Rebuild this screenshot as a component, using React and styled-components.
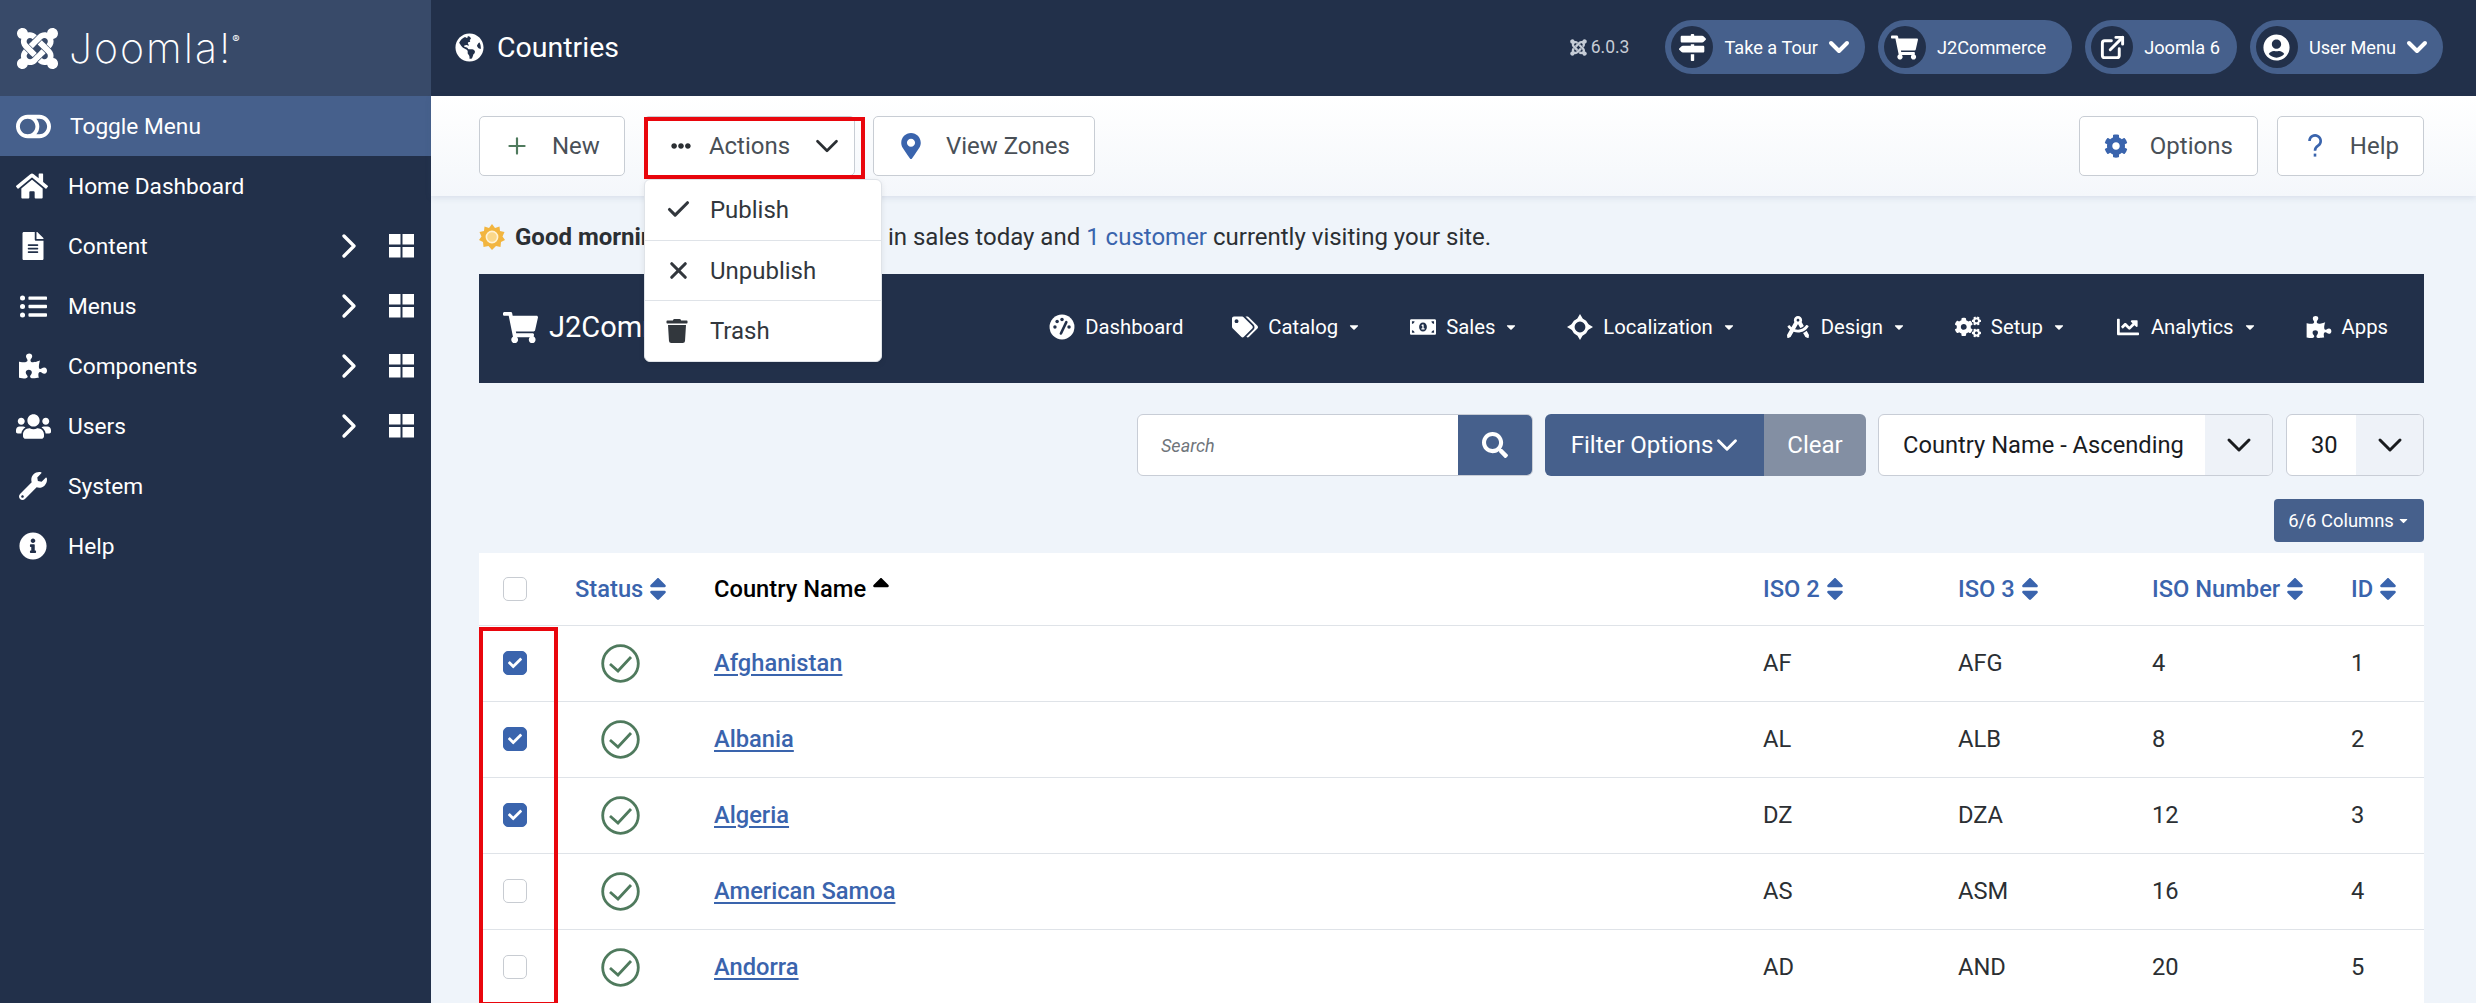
import React from "react"
import styled, { createGlobalStyle } from "styled-components"
import {
  FaChartLine, FaCheck, FaCog, FaCogs, FaDraftingCompass, FaEllipsisH, FaFileAlt,
  FaGlobeAmericas, FaHome, FaInfoCircle, FaJoomla, FaListUl, FaMapMarkerAlt, FaMapSigns,
  FaMoneyBillAlt, FaPuzzlePiece, FaSearch, FaShoppingCart, FaSort, FaSortUp,
  FaTags, FaToggleOff, FaTrash, FaUserCircle, FaUsers, FaWrench, FaCaretDown,
} from "react-icons/fa"
import { Check as CheckMark, ChevronDown, ChevronRight, ExternalLink, Plus, X } from "lucide-react"

const NAVY = "#22304a"
const STEEL = "#46608c"
const BLUE = "#3a64ad"

const Global = createGlobalStyle`
  html, body { margin: 0; padding: 0; background: #eff4fa; }
  body { font-family: Roboto, "Liberation Sans", sans-serif; overflow: hidden; }
  * { box-sizing: border-box; }
`

const Shell = styled.div`
  display: grid;
  grid-template-columns: 431px 1fr;
  width: 2476px;
  height: 1003px;
  overflow: hidden;
`

/* sidebar */
const Sidebar = styled.aside`
  background: ${NAVY};
  color: #fff;
  display: flex;
  flex-direction: column;
`
const LogoBar = styled.div`
  height: 96px;
  background: #384a69;
  display: flex;
  align-items: center;
  padding-left: 14px;
  gap: 8px;
  svg { font-size: 47px; }
`
const Wordmark = styled.span`
  font-family: Inter, sans-serif;
  font-weight: 200;
  font-size: 41px;
  letter-spacing: 2px;
  line-height: 1;
  sup { font-size: 11px; font-weight: 400; vertical-align: 20px; letter-spacing: 0; margin-left: 0; }
`
const SideRow = styled.div`
  height: 60px;
  display: grid;
  grid-template-columns: ${p => (p.$active ? 54 : 52)}px 1fr auto auto;
  align-items: center;
  padding: 0 17px 0 16px;
  font-size: 22.7px;
  background: ${p => (p.$active ? STEEL : "transparent")};
`
const SideIcon = styled.span`
  display: flex;
  svg { font-size: ${p => p.$size || 28}px; margin-left: ${p => p.$shift || 0}px; }
`
const SideChevron = styled.span`
  display: flex;
  margin-right: 20px;
  svg { width: 40px; height: 40px; stroke-width: 2; }
`
const TileIcon = styled.svg`
  width: 25px;
  height: 24px;
  display: block;
  fill: #fff;
`

/* top header */
const Main = styled.main`
  display: flex;
  flex-direction: column;
  min-width: 0;
`
const Header = styled.header`
  height: 96px;
  flex: none;
  background: ${NAVY};
  color: #fff;
  display: flex;
  align-items: center;
  padding: 0 33px 2px 24px;
`
const Title = styled.h1`
  margin: 0;
  flex: 1;
  display: flex;
  align-items: center;
  gap: 13px;
  font-size: 28.5px;
  font-weight: 400;
  svg { font-size: 29px; }
`
const Version = styled.span`
  display: flex;
  align-items: center;
  gap: 3px;
  margin-right: 23px;
  color: #c6ccd6;
  font-size: 17.5px;
  svg { font-size: 19px; }
`
const Pill = styled.div`
  height: 54px;
  margin-left: 13px;
  padding: 0 ${p => p.$right}px 0 6px;
  border-radius: 27px;
  background: ${STEEL};
  display: flex;
  align-items: center;
  font-size: 18.2px;
`
const PillIcon = styled.span`
  width: 42px;
  height: 42px;
  border-radius: 50%;
  background: ${NAVY};
  margin-right: 11px;
  display: flex;
  align-items: center;
  justify-content: center;
  svg { width: 27px; height: 27px; }
`
const PillChevron = styled.span`
  display: flex;
  margin-left: 5px;
  svg { width: 32px; height: 32px; stroke-width: 3; }
`

/* toolbar */
const Toolbar = styled.div`
  height: 100px;
  flex: none;
  padding: 20px 52px 0 48px;
  display: flex;
  background: linear-gradient(#fff, #f4f7fb);
  box-shadow: 0 2px 6px rgba(60, 80, 120, .12);
  position: relative;
  z-index: 1;
`
const ToolButton = styled.div`
  height: 60px;
  padding: 0 24px;
  margin-right: ${p => p.$gap ?? 19}px;
  background: #fff;
  border: 1px solid #c8cdd4;
  border-radius: 5px;
  display: flex;
  align-items: center;
  gap: 22px;
  font-size: 24px;
  color: #495057;
`
const ActionsButton = styled(ToolButton)`
  width: 211px;
  padding: 0 11px 0 26px;
  gap: 18px;
`
const ChevronSlot = styled.span`
  display: flex;
  margin-left: auto;
  color: #2b2f33;
  svg { width: 38px; height: 38px; stroke-width: 1.7; }
`
const ToolIcon = styled.span`
  display: flex;
  color: ${p => p.$color || BLUE};
  svg { font-size: ${p => p.$size || 24}px; }
`
const QuestionIcon = styled.svg`
  width: 26px;
  height: 24px;
  display: block;
  fill: none;
  stroke: ${BLUE};
  stroke-width: 2.6;
`
const Spacer = styled.div`flex: 1;`
const ActionsWrap = styled.div`
  position: relative;
  margin-right: 18px;
`
const RedFrame = styled.div`
  position: absolute;
  left: 0;
  top: 1px;
  width: 221px;
  height: 62px;
  border: 4px solid #e9060d;
  pointer-events: none;
`
const ActionsMenu = styled.div`
  position: absolute;
  left: 0;
  top: 63px;
  width: 238px;
  height: 183px;
  background: #fff;
  border: 1px solid #dfe3e8;
  border-radius: 6px;
  box-shadow: 0 2px 6px rgba(0, 0, 0, .08);
  display: flex;
  flex-direction: column;
  z-index: 5;
`
const MenuItem = styled.div`
  flex: 1;
  display: grid;
  grid-template-columns: 45px 1fr;
  align-items: center;
  padding-left: 20px;
  font-size: 24px;
  color: #32373d;
  & + & { border-top: 1px solid #dfe3e8; }
  svg { display: block; }
`
const TrashIcon = styled(FaTrash)`
  font-size: 24px;
`

/* content */
const Content = styled.div`
  flex: 1;
  min-height: 0;
  padding: 0 52px 0 48px;
`
const Greeting = styled.p`
  margin: 0;
  height: 78px;
  padding-top: 4px;
  display: flex;
  align-items: center;
  font-size: 24px;
  color: #2b2f33;
  white-space: pre;
  strong { font-weight: 700; }
  a { color: ${BLUE}; }
`
const SunIcon = styled.svg`
  width: 26px;
  height: 26px;
  margin-right: 10px;
`
const NavBar = styled.nav`
  height: 109px;
  background: ${NAVY};
  color: #fff;
  display: flex;
  align-items: center;
  justify-content: space-between;
  padding: 0 36px 3px 24px;
`
const Brand = styled.div`
  display: flex;
  align-items: center;
  gap: 11px;
  font-size: 29px;
  svg { font-size: 35px; }
`
const NavItems = styled.div`
  display: flex;
  gap: 49px;
`
const NavItem = styled.div`
  display: flex;
  align-items: center;
  font-size: 20.3px;
  > svg:first-child { font-size: 22px; width: 26px; margin-right: 10px; }
`
const Caret = styled(FaCaretDown)`
  font-size: 14px;
  margin-left: 9px;
`
const FilterRow = styled.div`
  display: flex;
  justify-content: flex-end;
  margin-top: 31px;
  height: 62px;
`
const SearchBox = styled.div`
  width: 396px;
  display: flex;
  border: 1px solid #c8cdd6;
  border-radius: 6px;
  background: #fff;
  overflow: hidden;
  margin-right: 12px;
`
const SearchField = styled.div`
  flex: 1;
  display: flex;
  align-items: center;
  padding-left: 23px;
  font-size: 18px;
  font-style: italic;
  color: #6f757b;
`
const SearchButton = styled.div`
  width: 74px;
  background: ${STEEL};
  color: #fff;
  display: flex;
  align-items: center;
  justify-content: center;
  svg { font-size: 26px; }
`
const FilterGroup = styled.div`
  display: flex;
  border-radius: 6px;
  overflow: hidden;
  margin-right: 12px;
  font-size: 24px;
  color: #fff;
`
const FilterButton = styled.div`
  width: 219px;
  background: ${STEEL};
  display: flex;
  align-items: center;
  justify-content: center;
  svg { width: 34px; height: 34px; stroke-width: 2; margin: 0 -6px 0 -3px; }
`
const ClearButton = styled.div`
  width: 102px;
  background: #838fa3;
  display: flex;
  align-items: center;
  justify-content: center;
`
const Select = styled.div`
  width: ${p => p.$width}px;
  margin-left: ${p => p.$gap || 0}px;
  display: grid;
  grid-template-columns: 1fr 67px;
  background: #fff;
  border: 1px solid #c8cdd6;
  border-radius: 6px;
  overflow: hidden;
  font-size: 23.7px;
  color: #1a1c1f;
`
const SelectValue = styled.div`
  display: flex;
  align-items: center;
  padding-left: ${p => p.$pad}px;
`
const SelectArrow = styled.div`
  background: #eef2f8;
  display: flex;
  align-items: center;
  justify-content: center;
  svg { width: 40px; height: 40px; stroke-width: 1.8; }
`
const ColumnsRow = styled.div`
  display: flex;
  justify-content: flex-end;
  margin-top: 23px;
`
const ColumnsButton = styled.div`
  width: 150px;
  height: 43px;
  background: ${STEEL};
  color: #fff;
  border-radius: 4px;
  display: flex;
  align-items: center;
  justify-content: center;
  font-size: 18.4px;
  svg { font-size: 13px; margin-left: 3px; }
`

/* table */
const TableWrap = styled.div`
  position: relative;
  margin-top: 11px;
  background: #fff;
`
const Table = styled.table`
  width: 100%;
  table-layout: fixed;
  border-collapse: collapse;
  font-size: 23.7px;
  color: #2b2f33;
  th, td { padding: 0; text-align: left; }
  th { height: 72px; font-weight: 500; }
  td { height: 76px; }
  tr { border-bottom: 1px solid #dfe3e8; }
  a { color: ${BLUE}; font-weight: 500; text-decoration: underline; text-underline-offset: 3px; }
`
const Sortable = styled.span`
  display: inline-flex;
  align-items: center;
  gap: 1px;
  color: ${p => (p.$active ? "#000" : BLUE)};
  svg { font-size: 28px; }
`
const Check = styled.span`
  margin-left: 24px;
  width: 24px;
  height: 24px;
  border-radius: 5px;
  display: flex;
  align-items: center;
  justify-content: center;
  color: #fff;
  border: 1px solid ${p => (p.$on ? BLUE : "#c8ccd2")};
  background: ${p => (p.$on ? BLUE : "#fff")};
  svg { font-size: 14px; }
`
const StatusIcon = styled.svg`
  width: 39px;
  height: 39px;
  display: block;
  margin-left: 26px;
`
const ColumnFrame = styled.div`
  position: absolute;
  left: 0;
  top: 74px;
  width: 79px;
  bottom: 0;
  border: 4px solid #e9060d;
  pointer-events: none;
`

const Tiles = () => (
  <TileIcon viewBox="0 0 25 24">
    <rect x="0" y="0" width="11.5" height="10.5" />
    <rect x="13.5" y="0" width="11.5" height="10.5" />
    <rect x="0" y="13" width="11.5" height="10.5" />
    <rect x="13.5" y="13" width="11.5" height="10.5" />
  </TileIcon>
)

const GaugeIcon = () => (
  <svg viewBox="0 0 24 24">
    <circle cx="12" cy="12" r="11.5" fill="#fff" />
    <g fill={NAVY}>
      <circle cx="5.5" cy="12" r="1.6" />
      <circle cx="7.5" cy="7" r="1.6" />
      <circle cx="12" cy="5" r="1.6" />
      <circle cx="18.5" cy="12" r="1.6" />
    </g>
    <path d="M11 18 L16 7.5" stroke={NAVY} strokeWidth="2.4" strokeLinecap="round" />
  </svg>
)

const TargetIcon = () => (
  <svg viewBox="0 0 24 24">
    <path d="M12 0 L15 5 H9 Z M12 24 L15 19 H9 Z M0 12 L5 9 V15 Z M24 12 L19 9 V15 Z" fill="#fff" />
    <circle cx="12" cy="12" r="6.5" fill="none" stroke="#fff" strokeWidth="3" />
  </svg>
)

const Sun = () => (
  <SunIcon viewBox="0 0 26 26">
    <path
      d="M13 0 L16 4 L20.5 2.5 L21 7 L25.5 8 L23.5 12.5 L26 16 L22 18 L21.5 23 L17 22 L13 26 L9.5 22 L4.5 23 L4 18 L0 16 L2.5 12.5 L.5 8 L5 7 L5.5 2.5 L10 4 Z"
      fill="#f2b53f"
    />
    <circle cx="13" cy="13" r="5.6" fill="#fbd88a" stroke="#fff3d6" strokeWidth="1.6" />
  </SunIcon>
)

const sideItems = [
  { label: "Home Dashboard", icon: <FaHome />, size: 32 },
  { label: "Content", icon: <FaFileAlt />, size: 28, shift: 3, more: true },
  { label: "Menus", icon: <FaListUl />, size: 27, shift: 4, more: true },
  { label: "Components", icon: <FaPuzzlePiece />, size: 28, shift: 3, more: true },
  { label: "Users", icon: <FaUsers />, size: 35, shift: 0, more: true },
  { label: "System", icon: <FaWrench />, size: 28, shift: 3 },
  { label: "Help", icon: <FaInfoCircle />, size: 28, shift: 3 },
]

const navItems = [
  { label: "Dashboard", icon: <GaugeIcon /> },
  { label: "Catalog", icon: <FaTags />, caret: true },
  { label: "Sales", icon: <FaMoneyBillAlt />, caret: true },
  { label: "Localization", icon: <TargetIcon />, caret: true },
  { label: "Design", icon: <FaDraftingCompass />, caret: true },
  { label: "Setup", icon: <FaCogs />, caret: true },
  { label: "Analytics", icon: <FaChartLine />, caret: true },
  { label: "Apps", icon: <FaPuzzlePiece /> },
]

const countries = [
  ["Afghanistan", "AF", "AFG", 4, 1, true],
  ["Albania", "AL", "ALB", 8, 2, true],
  ["Algeria", "DZ", "DZA", 12, 3, true],
  ["American Samoa", "AS", "ASM", 16, 4, false],
  ["Andorra", "AD", "AND", 20, 5, false],
]

const Status = () => (
  <StatusIcon viewBox="0 0 39 39" fill="none">
    <circle cx="19.5" cy="19.5" r="17.8" stroke="#4f7a5d" strokeWidth="2.8" />
    <path d="M9 20 L17 27 L30 13" stroke="#4f7a5d" strokeWidth="2.8" />
  </StatusIcon>
)

const App = () => {
  return (<Shell>
    <Global />
    <Sidebar>
      <LogoBar>
        <FaJoomla />
        <Wordmark>Joomla!<sup>®</sup></Wordmark>
      </LogoBar>
      <SideRow $active>
        <SideIcon $size={35}><FaToggleOff /></SideIcon>
        <span>Toggle Menu</span>
      </SideRow>
      {sideItems.map(item => (
        <SideRow key={item.label}>
          <SideIcon $size={item.size} $shift={item.shift}>{item.icon}</SideIcon>
          <span>{item.label}</span>
          {item.more && <SideChevron><ChevronRight /></SideChevron>}
          {item.more && <Tiles />}
        </SideRow>
      ))}
    </Sidebar>

    <Main>
      <Header>
        <Title><FaGlobeAmericas />Countries</Title>
        <Version><FaJoomla />6.0.3</Version>
        <Pill $right={10}>
          <PillIcon><FaMapSigns /></PillIcon>Take a Tour
          <PillChevron><ChevronDown /></PillChevron>
        </Pill>
        <Pill $right={26}>
          <PillIcon><FaShoppingCart /></PillIcon>J2Commerce
        </Pill>
        <Pill $right={17}>
          <PillIcon><ExternalLink strokeWidth={2.6} /></PillIcon>Joomla 6
        </Pill>
        <Pill $right={10}>
          <PillIcon><FaUserCircle /></PillIcon>User Menu
          <PillChevron><ChevronDown /></PillChevron>
        </Pill>
      </Header>

      <Toolbar>
        <ToolButton>
          <ToolIcon $color="#4f7a5d"><Plus size={26} /></ToolIcon>New
        </ToolButton>
        <ActionsWrap>
          <ActionsButton $gap={0}>
            <ToolIcon $color="#2b2f33" $size={20}><FaEllipsisH /></ToolIcon>
            Actions
            <ChevronSlot><ChevronDown /></ChevronSlot>
          </ActionsButton>
          <RedFrame />
          <ActionsMenu>
            <MenuItem><CheckMark size={27} strokeWidth={2.8} />Publish</MenuItem>
            <MenuItem><X size={27} strokeWidth={2.8} />Unpublish</MenuItem>
            <MenuItem><TrashIcon />Trash</MenuItem>
          </ActionsMenu>
        </ActionsWrap>
        <ToolButton>
          <ToolIcon $size={26}><FaMapMarkerAlt /></ToolIcon>View Zones
        </ToolButton>
        <Spacer />
        <ToolButton>
          <ToolIcon $size={24}><FaCog /></ToolIcon>Options
        </ToolButton>
        <ToolButton $gap={0}>
          <QuestionIcon viewBox="-4 0 26 24">
            <path d="M3.5 7 a5.6 5.6 0 1 1 8.6 4.7 c-2 1.3 -3.1 2.3 -3.1 5" />
            <path d="M9 19.6 v3" />
          </QuestionIcon>
          Help
        </ToolButton>
      </Toolbar>

      <Content>
        <Greeting>
          <Sun /><strong>Good morning!</strong> You've made $0.00 in sales today and <a>1 customer</a> currently visiting your site.
        </Greeting>
        <NavBar>
          <Brand><FaShoppingCart />J2Commerce</Brand>
          <NavItems>
            {navItems.map(item => (
              <NavItem key={item.label}>
                {item.icon}{item.label}{item.caret && <Caret />}
              </NavItem>
            ))}
          </NavItems>
        </NavBar>
        <FilterRow>
          <SearchBox>
            <SearchField>Search</SearchField>
            <SearchButton><FaSearch /></SearchButton>
          </SearchBox>
          <FilterGroup>
            <FilterButton>Filter Options<ChevronDown /></FilterButton>
            <ClearButton>Clear</ClearButton>
          </FilterGroup>
          <Select $width={395}>
            <SelectValue $pad={24}>Country Name - Ascending</SelectValue>
            <SelectArrow><ChevronDown /></SelectArrow>
          </Select>
          <Select $width={138} $gap={13}>
            <SelectValue $pad={24}>30</SelectValue>
            <SelectArrow><ChevronDown /></SelectArrow>
          </Select>
        </FilterRow>
        <ColumnsRow>
          <ColumnsButton>6/6 Columns<FaCaretDown /></ColumnsButton>
        </ColumnsRow>
        <TableWrap>
          <Table>
            <colgroup>
              <col width="96" /><col width="139" /><col width="1049" />
              <col width="195" /><col width="194" /><col width="199" /><col />
            </colgroup>
            <thead>
              <tr>
                <th><Check /></th>
                <th><Sortable>Status<FaSort /></Sortable></th>
                <th><Sortable $active>Country Name<FaSortUp /></Sortable></th>
                <th><Sortable>ISO 2<FaSort /></Sortable></th>
                <th><Sortable>ISO 3<FaSort /></Sortable></th>
                <th><Sortable>ISO Number<FaSort /></Sortable></th>
                <th><Sortable>ID<FaSort /></Sortable></th>
              </tr>
            </thead>
            <tbody>
              {countries.map(([name, iso2, iso3, num, id, on]) => (
                <tr key={id}>
                  <td><Check $on={on}>{on && <FaCheck />}</Check></td>
                  <td><Status /></td>
                  <td><a>{name}</a></td>
                  <td>{iso2}</td>
                  <td>{iso3}</td>
                  <td>{num}</td>
                  <td>{id}</td>
                </tr>
              ))}
            </tbody>
          </Table>
          <ColumnFrame />
        </TableWrap>
      </Content>
    </Main>
  </Shell>)
}

export default App
